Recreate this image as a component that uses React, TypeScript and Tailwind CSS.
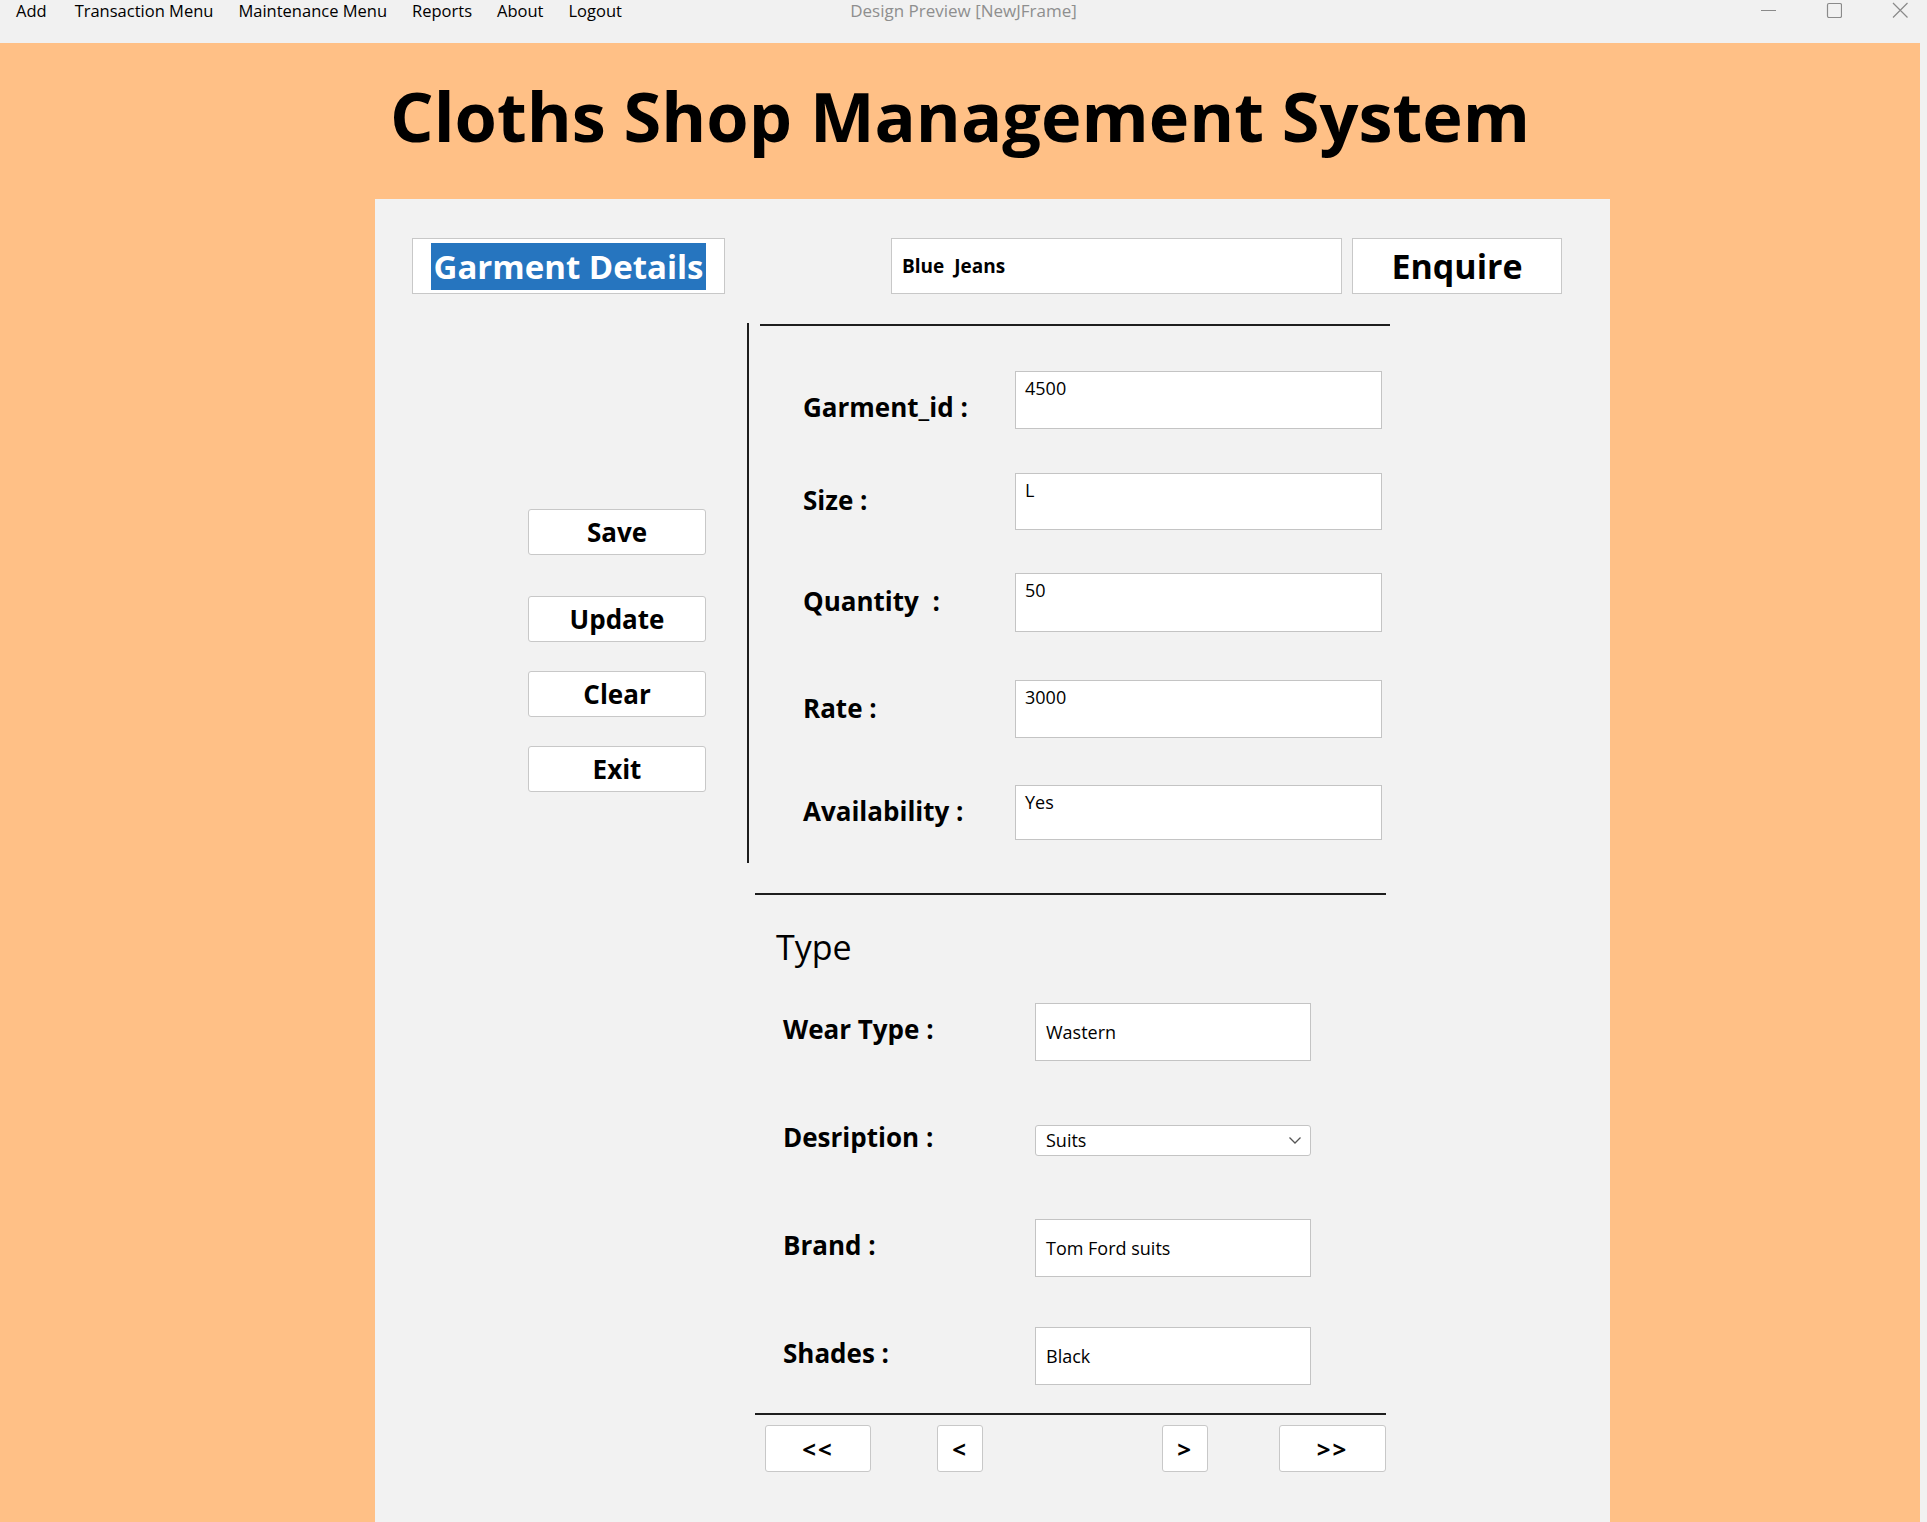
import React from "react";

const menus = ["Add", "Transaction Menu", "Maintenance Menu", "Reports", "About", "Logout"];

const details = [
  { label: "Garment_id :", value: "4500", gap: "mt-[45px]", h: "h-[58px]", nudge: "pt-[14px]" },
  { label: "Size :", value: "L", gap: "mt-[44px]", h: "h-[57px]", nudge: "pb-[2px]" },
  { label: "Quantity  :", value: "50", gap: "mt-[43px]", h: "h-[59px]", nudge: "pb-[2px]" },
  { label: "Rate :", value: "3000", gap: "mt-[48px]", h: "h-[58px]", nudge: "pb-[2px]" },
  { label: "Availability :", value: "Yes", gap: "mt-[47px]", h: "h-[55px]", nudge: "pb-[2px]" },
];

const actions = [
  { text: "Save", gap: "" },
  { text: "Update", gap: "mt-[41px]" },
  { text: "Clear", gap: "mt-[29px]" },
  { text: "Exit", gap: "mt-[29px]" },
];

const TypeRow = ({ label, children }: { label: string; children: React.ReactNode }) => (
  <div className="flex items-center h-[58px]">
    <div className="w-[280px] pl-[28px] pb-[6px] text-[26px] font-bold text-black">{label}</div>
    {children}
  </div>
);

const Field = ({ value }: { value: string }) => (
  <div className="w-[276px] h-[58px] bg-white border border-[#c4c4c4] flex items-center pl-[10px] text-[18px] text-black">
    {value}
  </div>
);

const NavButton = ({ text, className }: { text: string; className: string }) => (
  <button
    className={`h-[47px] bg-white border border-[#c8c8c8] rounded-[3px] flex items-center justify-center text-[24px] font-bold text-black tracking-[2px] ${className}`}
  >
    {text}
  </button>
);

export default function App() {
  return (
    <div className="w-[1927px] h-[1522px] flex flex-col bg-[#f1f1f1] font-['Open_Sans',sans-serif] overflow-hidden">
      {/* window / menu bar */}
      <div className="h-[43px] grid grid-cols-[1fr_auto_1fr] items-start">
        <div className="flex gap-[25px] pl-[16px] text-[16.5px] leading-[22px] text-black">
          {menus.map((m, i) => (
            <span key={m} className={i === 1 ? "ml-[3px]" : ""}>
              {m}
            </span>
          ))}
        </div>
        <div className="text-[17px] leading-[22px] text-[#8e8e8e]">Design Preview [NewJFrame]</div>
        <div className="flex justify-end gap-[50px] pr-[19px] pt-[2px]">
          <svg width="16" height="16" viewBox="0 0 16 16">
            <line x1="1" y1="8.5" x2="16" y2="8.5" stroke="#8a8a8a" strokeWidth="1" />
          </svg>
          <svg width="16" height="16" viewBox="0 0 16 16">
            <rect x="1.5" y="1.5" width="14" height="14" rx="1.5" fill="none" stroke="#8a8a8a" strokeWidth="1.2" />
          </svg>
          <svg width="16" height="16" viewBox="0 0 16 16">
            <path d="M1 1 L15.5 15.5 M15.5 1 L1 15.5" stroke="#8a8a8a" strokeWidth="1.2" />
          </svg>
        </div>
      </div>

      <div className="flex-1 flex">
        <div className="flex-1 bg-[#ffc086] flex flex-col">
          <h1 className="pt-[38px] text-center text-[68.5px] leading-[69px] font-bold text-black">
            Cloths Shop Management System
          </h1>

          <div className="mt-[49px] ml-[375px] w-[1235px] flex-1 bg-[#f2f2f2] flex flex-col">
            {/* header row */}
            <div className="flex mt-[39px]">
              <div className="ml-[37px] w-[313px] h-[56px] bg-white border border-[#c8c8c8] flex items-center justify-center">
                <span className="bg-[#2675bf] text-white text-[33px] font-bold leading-[47px] h-[47px] px-[2px]">
                  Garment Details
                </span>
              </div>
              <div className="ml-[166px] w-[451px] h-[56px] bg-white border border-[#c8c8c8] flex items-center pl-[10px] text-[19px] font-bold text-black whitespace-pre">
                Blue  Jeans
              </div>
              <button className="ml-[10px] w-[210px] h-[56px] bg-white border border-[#c8c8c8] flex items-center justify-center text-[34px] font-bold text-black">
                Enquire
              </button>
            </div>

            {/* middle */}
            <div className="flex mt-[29px]">
              <div className="w-[372px] pl-[153px] pt-[186px] flex flex-col">
                {actions.map((a) => (
                  <button
                    key={a.text}
                    className={`w-[178px] h-[46px] bg-white border border-[#c8c8c8] rounded-[3px] flex items-center justify-center text-[26px] font-bold text-black ${a.gap}`}
                  >
                    {a.text}
                  </button>
                ))}
              </div>
              <div className="w-[2px] h-[540px] bg-[#1e1e1e]" />
              <div className="ml-[11px] w-[630px] flex flex-col">
                <div className="mt-[1px] h-[2px] w-[630px] bg-[#1e1e1e]" />
                {details.map((d) => (
                  <div key={d.label} className={`flex items-center ${d.gap}`}>
                    <div className={`w-[255px] pl-[43px] text-[26px] font-bold text-black whitespace-pre ${d.nudge}`}>
                      {d.label}
                    </div>
                    <div
                      className={`w-[367px] ${d.h} bg-white border border-[#c4c4c4] pl-[9px] pt-[4px] text-[18px] leading-[24px] text-black`}
                    >
                      {d.value}
                    </div>
                  </div>
                ))}
              </div>
            </div>

            {/* type section */}
            <div className="ml-[380px] w-[631px] mt-[30px] flex flex-col">
              <div className="h-[2px] bg-[#1e1e1e]" />
              <div className="mt-[35px] pl-[21px] text-[34px] leading-none text-black">Type</div>
              <div className="mt-[39px] flex flex-col gap-[50px]">
                <TypeRow label="Wear Type :">
                  <Field value="Wastern" />
                </TypeRow>
                <TypeRow label="Desription :">
                  <div className="w-[276px] h-[31px] bg-white border border-[#c4c4c4] rounded-[3px] flex items-center justify-between pl-[10px] pr-[8px] text-[18px] text-black">
                    <span>Suits</span>
                    <svg width="14" height="10" viewBox="0 0 14 10">
                      <path d="M1.5 2.5 L7 8 L12.5 2.5" fill="none" stroke="#555" strokeWidth="1.3" />
                    </svg>
                  </div>
                </TypeRow>
                <TypeRow label="Brand :">
                  <Field value="Tom Ford suits" />
                </TypeRow>
                <TypeRow label="Shades :">
                  <Field value="Black" />
                </TypeRow>
              </div>
              <div className="mt-[28px] h-[2px] bg-[#1e1e1e]" />
              <div className="mt-[10px] flex">
                <NavButton text="<<" className="ml-[10px] w-[106px]" />
                <NavButton text="<" className="ml-[66px] w-[46px]" />
                <NavButton text=">" className="ml-[179px] w-[46px]" />
                <NavButton text=">>" className="ml-[71px] w-[107px]" />
              </div>
            </div>
          </div>
        </div>
        <div className="w-[7px] bg-[#f1f1f1]" />
      </div>
    </div>
  );
}
